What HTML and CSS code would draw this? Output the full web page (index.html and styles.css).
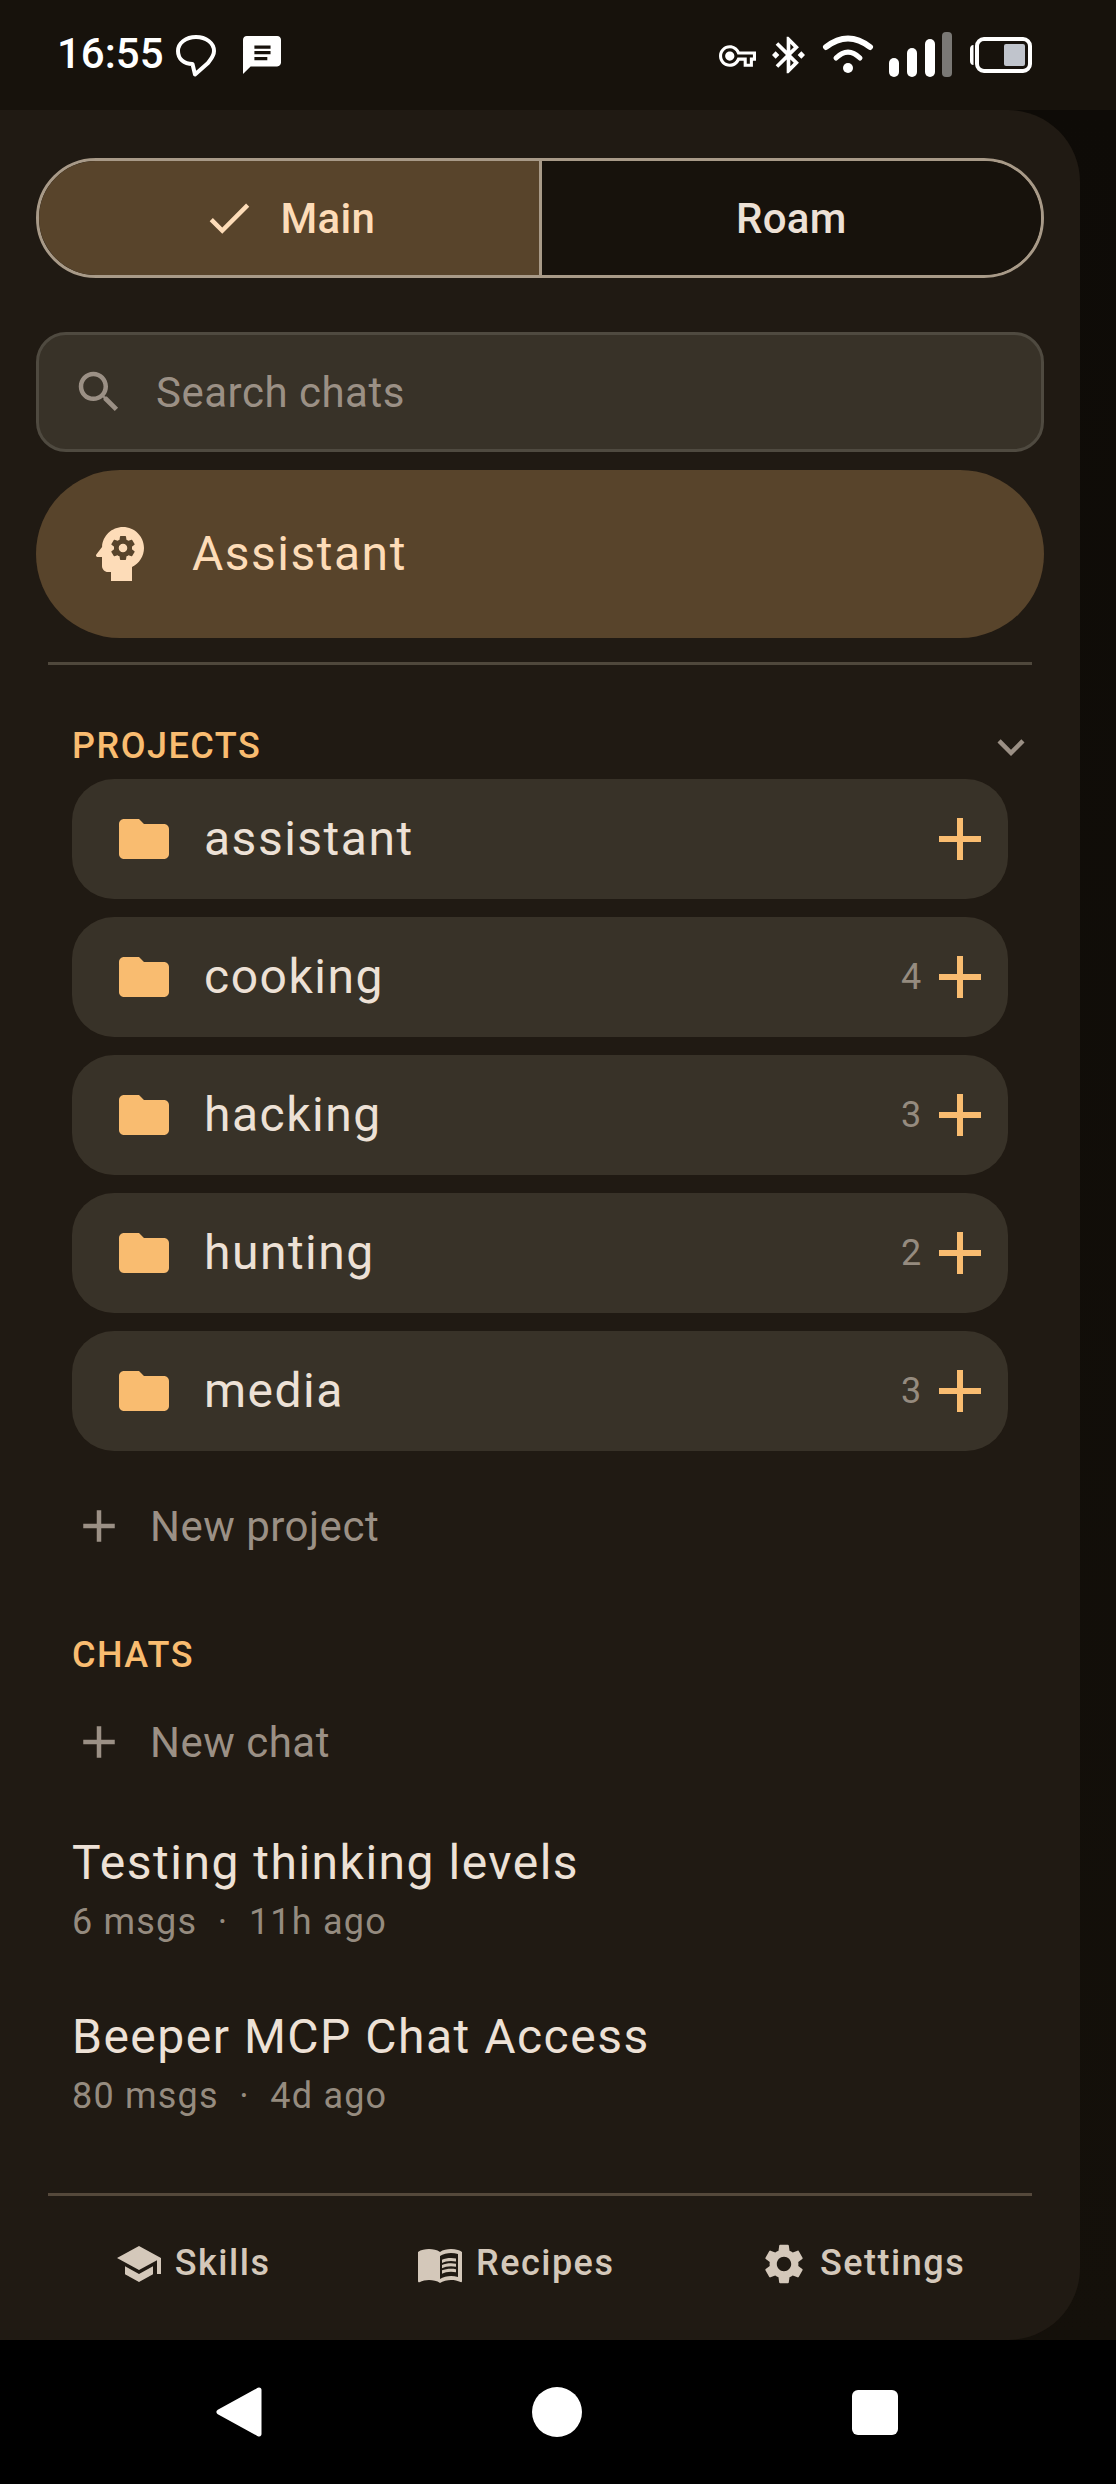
FILE: index.html
```html
<!DOCTYPE html>
<html lang="en">
<head>
<meta charset="utf-8">
<title>Drawer</title>
<link rel="stylesheet" href="styles.css">
</head>
<body>
<header class="statusbar">
  <div class="status-left">
    <span class="time">16:55</span>
    <svg class="ic-bubble" viewBox="0 0 40 42"><path d="M20 2C30 2 38 8 38 16 38 21 35 24 32 28L19 39.500 16.500 29C8 29 2 24 2 16 2 8 10 2 20 2z"/></svg>
    <svg class="ic-msg" viewBox="2 2 20 20"><path fill-rule="evenodd" d="M20 2H4C2.900 2 2.010 2.900 2.010 4L2 22l4-4h14c1.100 0 2-.9 2-2V4c0-1.100-.9-2-2-2zM8 7h8.500v1.700H8zM8 9.900h8.500v1.700H8zM8 13h6.800v1.700H8z"/></svg>
  </div>
  <div class="status-right">
    <svg class="ic-key" viewBox="0 5 24 14"><path d="M22 19h-6v-4h-2.680c-1.140 2.420-3.600 4-6.320 4-3.860 0-7-3.140-7-7s3.140-7 7-7c2.720 0 5.170 1.580 6.320 4H24v6h-2v4zm-4-2h2v-4h2v-2H11.940l-.23-.67C11.010 8.340 9.110 7 7 7c-2.760 0-5 2.240-5 5s2.240 5 5 5c2.110 0 4.010-1.340 4.710-3.330l.23-.67H18v4zM7 15c-1.650 0-3-1.350-3-3s1.350-3 3-3 3 1.350 3 3-1.350 3-3 3z"/></svg>
    <svg class="ic-bt" viewBox="3 2 18 20"><path d="M7 12l-2-2-2 2 2 2 2-2zm10.710-4.290L12 2h-1v7.590L6.410 5 5 6.410 10.590 12 5 17.590 6.410 19 11 14.410V22h1l5.710-5.710-4.300-4.290 4.300-4.290zM13 5.830l1.880 1.880L13 9.590V5.830zm1.880 10.460L13 18.170v-3.760l1.880 1.880zM19 10l-2 2 2 2 2-2-2-2z"/></svg>
    <svg class="ic-wifi" viewBox="0 0 52 40"><path class="wifi-arc" d="M4 13Q26-4 48 13"/><path class="wifi-arc-mid" d="M14 24Q26 12 38 24"/><circle cx="26" cy="34" r="5"/></svg>
    <svg class="ic-signal" viewBox="0 0 64 46"><rect x="0" y="26" width="10" height="19" rx="5"/><rect x="18" y="16" width="10" height="29" rx="5"/><rect x="36" y="7" width="10" height="38" rx="5"/><rect class="signal-off" x="53" y="0" width="10" height="45" rx="4"/></svg>
    <svg class="ic-battery" viewBox="0 0 62 36"><path d="M0 12c0-2 1-4 3.500-4v20C1 28 0 26 0 24z"/><rect class="batt-body" x="7" y="2" width="53" height="32" rx="7"/><rect class="batt-level" x="34" y="7" width="21" height="22" rx="2"/></svg>
  </div>
</header>

<div class="stage">
  <aside class="drawer">
    <div class="toggle">
      <div class="seg seg-on">
        <svg class="ic-check" viewBox="0 0 24 24"><path d="M9 16.170L4.830 12l-1.420 1.410L9 19 21 7l-1.410-1.410z"/></svg>
        <span>Main</span>
      </div>
      <div class="seg seg-off"><span>Roam</span></div>
    </div>

    <div class="search">
      <svg class="ic-search" viewBox="0 0 24 24"><path d="M15.500 14h-.79l-.28-.27C15.410 12.590 16 11.110 16 9.500 16 5.910 13.090 3 9.500 3S3 5.910 3 9.500 5.910 16 9.500 16c1.610 0 3.090-.59 4.230-1.570l.27.28v.79l5 4.990L20.490 19l-4.990-5zm-6 0C7.010 14 5 11.990 5 9.500S7.010 5 9.500 5 14 7.010 14 9.500 11.990 14 9.500 14z"/></svg>
      <span>Search chats</span>
    </div>

    <div class="assistant">
      <svg class="ic-head" viewBox="0 0 24 24"><path fill-rule="evenodd" d="M13 8.570c-.79 0-1.430.64-1.430 1.430s.64 1.430 1.430 1.430 1.430-.64 1.430-1.430-.64-1.430-1.430-1.430zM13 3C9.250 3 6.200 5.940 6.020 9.640L4.100 12.200c-.25.330-.01.800.400.800H6v3c0 1.100.9 2 2 2h1v3h7v-4.680c2.360-1.120 4-3.530 4-6.320 0-3.870-3.130-7-7-7zm3 7c0 .130-.01.260-.02.390l.83.660c.080.060.100.160.050.250l-.8 1.390c-.05.090-.16.120-.24.090l-.99-.4c-.21.160-.43.290-.67.390L14 13.830c-.01.100-.1.170-.2.170h-1.600c-.1 0-.18-.07-.2-.17l-.15-1.060c-.25-.1-.47-.23-.68-.39l-.99.400c-.09.030-.2 0-.25-.09l-.8-1.390c-.05-.08-.03-.19.050-.25l.84-.66c-.01-.13-.02-.26-.02-.39 0-.13.020-.27.040-.39l-.85-.66c-.08-.06-.1-.16-.05-.26l.8-1.380c.050-.09.150-.12.240-.09l1 .400c.2-.15.430-.29.670-.39L12 6.170c.020-.1.100-.17.200-.17h1.600c.1 0 .18.070.2.170l.15 1.060c.240.100.460.230.670.390l1-.4c.090-.03.200 0 .240.090l.8 1.380c.050.090.030.200-.05.260l-.85.660c.030.120.040.250.040.390z"/></svg>
      <span>Assistant</span>
    </div>

    <div class="divider divider-top"></div>

    <div class="projects-head">
      <span class="section-label">PROJECTS</span>
      <svg class="ic-chevron" viewBox="0 0 24 24"><path d="M16.590 8.590L12 13.170 7.410 8.590 6 10l6 6 6-6z"/></svg>
    </div>

    <ul class="projects">
      <li class="project">
        <svg class="ic-folder" viewBox="0 0 24 24"><path d="M10 4H4c-1.100 0-1.990.9-1.990 2L2 18c0 1.100.9 2 2 2h16c1.100 0 2-.9 2-2V8c0-1.100-.9-2-2-2h-8l-2-2z"/></svg>
        <span class="project-name">assistant</span>
        <svg class="ic-add" viewBox="0 0 24 24"><path d="M19 13h-6v6h-2v-6H5v-2h6V5h2v6h6v2z"/></svg>
      </li>
      <li class="project">
        <svg class="ic-folder" viewBox="0 0 24 24"><path d="M10 4H4c-1.100 0-1.990.9-1.990 2L2 18c0 1.100.9 2 2 2h16c1.100 0 2-.9 2-2V8c0-1.100-.9-2-2-2h-8l-2-2z"/></svg>
        <span class="project-name">cooking</span>
        <span class="project-count">4</span>
        <svg class="ic-add" viewBox="0 0 24 24"><path d="M19 13h-6v6h-2v-6H5v-2h6V5h2v6h6v2z"/></svg>
      </li>
      <li class="project">
        <svg class="ic-folder" viewBox="0 0 24 24"><path d="M10 4H4c-1.100 0-1.990.9-1.990 2L2 18c0 1.100.9 2 2 2h16c1.100 0 2-.9 2-2V8c0-1.100-.9-2-2-2h-8l-2-2z"/></svg>
        <span class="project-name">hacking</span>
        <span class="project-count">3</span>
        <svg class="ic-add" viewBox="0 0 24 24"><path d="M19 13h-6v6h-2v-6H5v-2h6V5h2v6h6v2z"/></svg>
      </li>
      <li class="project">
        <svg class="ic-folder" viewBox="0 0 24 24"><path d="M10 4H4c-1.100 0-1.990.9-1.990 2L2 18c0 1.100.9 2 2 2h16c1.100 0 2-.9 2-2V8c0-1.100-.9-2-2-2h-8l-2-2z"/></svg>
        <span class="project-name">hunting</span>
        <span class="project-count">2</span>
        <svg class="ic-add" viewBox="0 0 24 24"><path d="M19 13h-6v6h-2v-6H5v-2h6V5h2v6h6v2z"/></svg>
      </li>
      <li class="project">
        <svg class="ic-folder" viewBox="0 0 24 24"><path d="M10 4H4c-1.100 0-1.990.9-1.990 2L2 18c0 1.100.9 2 2 2h16c1.100 0 2-.9 2-2V8c0-1.100-.9-2-2-2h-8l-2-2z"/></svg>
        <span class="project-name">media</span>
        <span class="project-count">3</span>
        <svg class="ic-add" viewBox="0 0 24 24"><path d="M19 13h-6v6h-2v-6H5v-2h6V5h2v6h6v2z"/></svg>
      </li>
    </ul>

    <div class="new-row new-project">
      <svg class="ic-plus" viewBox="0 0 24 24"><path d="M19 13h-6v6h-2v-6H5v-2h6V5h2v6h6v2z"/></svg>
      <span>New project</span>
    </div>

    <div class="section-label chats-label">CHATS</div>

    <div class="new-row new-chat">
      <svg class="ic-plus" viewBox="0 0 24 24"><path d="M19 13h-6v6h-2v-6H5v-2h6V5h2v6h6v2z"/></svg>
      <span>New chat</span>
    </div>

    <div class="chat chat-first">
      <div class="chat-title">Testing thinking levels</div>
      <div class="chat-meta"><span>6 msgs</span><span>·</span><span>11h ago</span></div>
    </div>
    <div class="chat">
      <div class="chat-title">Beeper MCP Chat Access</div>
      <div class="chat-meta"><span>80 msgs</span><span>·</span><span>4d ago</span></div>
    </div>

    <div class="divider divider-bottom"></div>

    <nav class="drawer-nav">
      <div class="nav-item">
        <svg class="ic-nav" viewBox="0 0 24 24"><path d="M5 13.180v4L12 21l7-3.820v-4L12 17l-7-3.820zM12 3L1 9l11 6 9-4.910V17h2V9L12 3z"/></svg>
        <span>Skills</span>
      </div>
      <div class="nav-item">
        <svg class="ic-nav" viewBox="0 0 24 24"><path fill-rule="evenodd" d="M21 5c-1.110-.35-2.330-.5-3.500-.5-1.950 0-4.050.4-5.500 1.500-1.450-1.100-3.550-1.500-5.500-1.500S2.450 4.900 1 6v14.650c0 .25.25.5.5.5.1 0 .15-.05.25-.05C3.100 20.450 5.050 20 6.500 20c1.950 0 4.050.4 5.500 1.500 1.350-.85 3.800-1.500 5.500-1.500 1.650 0 3.350.3 4.750 1.050.1.050.15.050.25.050.25 0 .5-.25.5-.5V6c-.6-.45-1.250-.75-2-1zm0 13.500c-1.100-.35-2.300-.5-3.500-.5-1.700 0-4.150.65-5.500 1.500V8c1.350-.85 3.800-1.500 5.500-1.500 1.200 0 2.400.15 3.500.5v11.500z"/><path d="M17.500 10.500c.88 0 1.730.09 2.500.26V9.240C19.210 9.090 18.360 9 17.500 9c-1.700 0-3.240.29-4.500.83v1.660c1.130-.64 2.700-.99 4.500-.99zM13 12.490v1.660c1.130-.64 2.700-.99 4.500-.99.88 0 1.730.09 2.500.26V11.900c-.79-.15-1.640-.24-2.500-.24-1.700 0-3.240.3-4.500.83zM17.500 14.330c-1.700 0-3.240.29-4.500.83v1.660c1.130-.64 2.700-.99 4.500-.99.88 0 1.730.09 2.500.26v-1.520c-.79-.16-1.640-.24-2.500-.24z"/></svg>
        <span>Recipes</span>
      </div>
      <div class="nav-item">
        <svg class="ic-nav" viewBox="0 0 24 24"><path d="M19.140 12.940c.04-.3.06-.61.06-.94 0-.32-.02-.64-.07-.94l2.030-1.580c.18-.14.23-.41.12-.61l-1.920-3.320c-.12-.22-.37-.29-.59-.22l-2.390.96c-.5-.38-1.030-.7-1.620-.94l-.36-2.540c-.04-.24-.24-.41-.48-.41h-3.840c-.24 0-.43.17-.47.41l-.36 2.540c-.59.24-1.130.57-1.620.94l-2.390-.96c-.22-.08-.47 0-.59.22L2.740 8.870c-.12.21-.08.47.12.61l2.030 1.580c-.05.3-.09.63-.09.94s.02.64.07.94l-2.030 1.580c-.18.14-.23.41-.12.61l1.920 3.320c.12.22.37.29.59.22l2.390-.96c.5.38 1.030.7 1.620.94l.36 2.540c.05.24.24.41.48.41h3.840c.24 0 .44-.17.47-.41l.36-2.540c.59-.24 1.130-.56 1.620-.94l2.390.96c.22.08.47 0 .59-.22l1.920-3.320c.12-.22.07-.47-.12-.61l-2.010-1.580zM12 15.600c-1.980 0-3.600-1.620-3.600-3.600s1.620-3.600 3.600-3.600 3.600 1.620 3.600 3.600-1.620 3.600-3.600 3.600z"/></svg>
        <span>Settings</span>
      </div>
    </nav>
  </aside>
</div>

<footer class="sysnav">
  <div class="sys-cell"><svg class="ic-back" viewBox="0 0 46 50"><path d="M43 3L3 25l40 22z"/></svg></div>
  <div class="sys-cell"><div class="sys-home"></div></div>
  <div class="sys-cell"><div class="sys-recent"></div></div>
</footer>
</body>
</html>
```

FILE: styles.css
```css
* { box-sizing: border-box; }
html, body { margin: 0; padding: 0; }
body {
  width: 1116px;
  height: 2484px;
  display: flex;
  flex-direction: column;
  overflow: hidden;
  background: #000;
  font-family: Roboto, "Noto Sans", sans-serif;
  color: #ede1d6;
}
svg { display: block; flex: none; fill: currentColor; }

/* status bar */
.statusbar {
  height: 110px;
  flex: none;
  background: #17120c;
  color: #fff;
  display: flex;
  justify-content: space-between;
  padding: 0 84px 0 57px;
}
.status-left, .status-right { display: flex; align-items: flex-start; }
.time { font-size: 42px; font-weight: 500; line-height: 50px; margin-top: 29px; }
.ic-bubble { width: 40px; height: 42px; margin: 35px 0 0 12px; fill: none; stroke: #fff; stroke-width: 4px; stroke-linejoin: round; }
.ic-msg { width: 38px; height: 38px; margin: 36px 0 0 27px; }
.ic-key { width: 37px; height: 22px; margin-top: 45px; }
.ic-bt { width: 33px; height: 38px; margin: 36px 0 0 16px; }
.ic-wifi { width: 52px; height: 40px; margin: 34px 0 0 17px; fill: #fff; }
.wifi-arc { fill: none; stroke: #fff; stroke-width: 6px; stroke-linecap: round; }
.wifi-arc-mid { fill: none; stroke: #fff; stroke-width: 5px; stroke-linecap: round; }
.ic-signal { width: 64px; height: 46px; margin: 32px 0 0 15px; }
.signal-off { fill: #7a7875; }
.ic-battery { width: 62px; height: 36px; margin: 37px 0 0 17px; }
.batt-body { fill: none; stroke: #fff; stroke-width: 4px; }
.batt-level { fill: #c0c4cc; }

/* stage + drawer */
.stage {
  height: 2230px;
  flex: none;
  background: linear-gradient(#0e0b07, #14100a);
}
.drawer {
  width: 1080px;
  height: 100%;
  background: #201a13;
  border-radius: 0 72px 72px 0;
  padding-top: 48px;
  display: flex;
  flex-direction: column;
}

.toggle {
  height: 120px;
  margin: 0 36px;
  display: flex;
  border: 3px solid #a89a88;
  border-radius: 60px;
  overflow: hidden;
  flex: none;
}
.seg {
  flex: 1;
  display: flex;
  align-items: center;
  justify-content: center;
  gap: 24px;
  font-size: 42px;
  font-weight: 500;
  letter-spacing: .3px;
}
.seg-on { background: #58442b; color: #fddcb8; }
.seg-off { background: #17120c; color: #ede1d6; border-left: 3px solid #a89a88; }
.ic-check { width: 54px; height: 54px; }

.search {
  height: 120px;
  margin: 54px 36px 0;
  padding-left: 33px;
  display: flex;
  align-items: center;
  gap: 30px;
  background: #383228;
  border: 3px solid #4f4a40;
  border-radius: 30px;
  color: #9b9085;
  font-size: 42px;
  letter-spacing: .5px;
  flex: none;
}
.ic-search { width: 54px; height: 54px; }

.assistant {
  height: 168px;
  margin: 18px 36px 0;
  padding-left: 48px;
  display: flex;
  align-items: center;
  gap: 36px;
  background: #58442b;
  border-radius: 84px;
  color: #fddcb8;
  font-size: 48px;
  line-height: 54px;
  letter-spacing: 1.5px;
  flex: none;
}
.assistant span { margin-bottom: 1px; }
.ic-head { width: 72px; height: 72px; }

.divider { height: 3px; margin: 0 48px; background: #4f483c; flex: none; }
.divider-top { margin-top: 24px; }
.divider-bottom { margin-top: 73px; background: #55493b; }

.projects-head {
  height: 54px;
  margin: 55px 42px 5px 72px;
  display: flex;
  align-items: center;
  justify-content: space-between;
  flex: none;
}
.section-label {
  font-size: 36px;
  font-weight: 500;
  letter-spacing: 1.500px;
  line-height: 48px;
  color: #f9bc70;
}
.projects-head .section-label { margin-bottom: 3px; }
.ic-chevron { width: 54px; height: 54px; color: #9b9085; }

.projects {
  list-style: none;
  margin: 0 72px;
  padding: 0;
  display: flex;
  flex-direction: column;
  gap: 18px;
  flex: none;
}
.project {
  height: 120px;
  padding: 0 12px 0 42px;
  display: flex;
  align-items: center;
  background: #383228;
  border-radius: 42px;
}
.ic-folder { width: 60px; height: 60px; color: #f9bc70; }
.project-name {
  flex: 1;
  margin: 0 0 1px 30px;
  font-size: 48px;
  line-height: 56px;
  letter-spacing: 1.5px;
  color: #ede1d6;
}
.project-count { font-size: 36px; color: #958b7f; letter-spacing: .8px; margin-right: 2px; }
.ic-add { width: 72px; height: 72px; color: #f9bc70; }

.new-row {
  height: 72px;
  padding-left: 72px;
  display: flex;
  align-items: center;
  gap: 24px;
  color: #9b9085;
  font-size: 42px;
  letter-spacing: .5px;
  flex: none;
}
.new-project { margin-top: 39px; }
.new-chat { margin-top: 27px; }
.ic-plus { width: 54px; height: 54px; }
.chats-label { margin: 69px 0 0 72px; flex: none; }

.chat { margin: 61px 0 0 72px; flex: none; }
.chat-first { margin-top: 55px; }
.chat-title { font-size: 48px; line-height: 60px; letter-spacing: 1.5px; color: #ede1d6; }
.chat-meta {
  margin-top: 5px;
  display: flex;
  gap: 20.5px;
  font-size: 36px;
  line-height: 48px;
  letter-spacing: 1.2px;
  color: #958b7f;
}

.drawer-nav {
  height: 136px;
  padding: 0 42px;
  display: flex;
  align-items: center;
  justify-content: space-around;
  flex: none;
}
.nav-item {
  display: flex;
  align-items: center;
  gap: 12px;
  font-size: 36px;
  font-weight: 500;
  letter-spacing: 1.5px;
  color: #d4c8ba;
}
.nav-item span { margin-bottom: 2px; }
.ic-nav { width: 48px; height: 48px; }

/* system navigation */
.sysnav {
  height: 144px;
  flex: none;
  background: #000;
  padding-left: 80px;
  display: grid;
  grid-template-columns: repeat(3, 318px);
}
.sys-cell { display: flex; align-items: center; justify-content: center; }
.ic-back { width: 46px; height: 50px; fill: #fff; stroke: #fff; stroke-width: 5px; stroke-linejoin: round; }
.sys-home { width: 50px; height: 50px; border-radius: 50%; background: #fff; }
.sys-recent { width: 46px; height: 45px; border-radius: 6px; background: #fff; }
```
